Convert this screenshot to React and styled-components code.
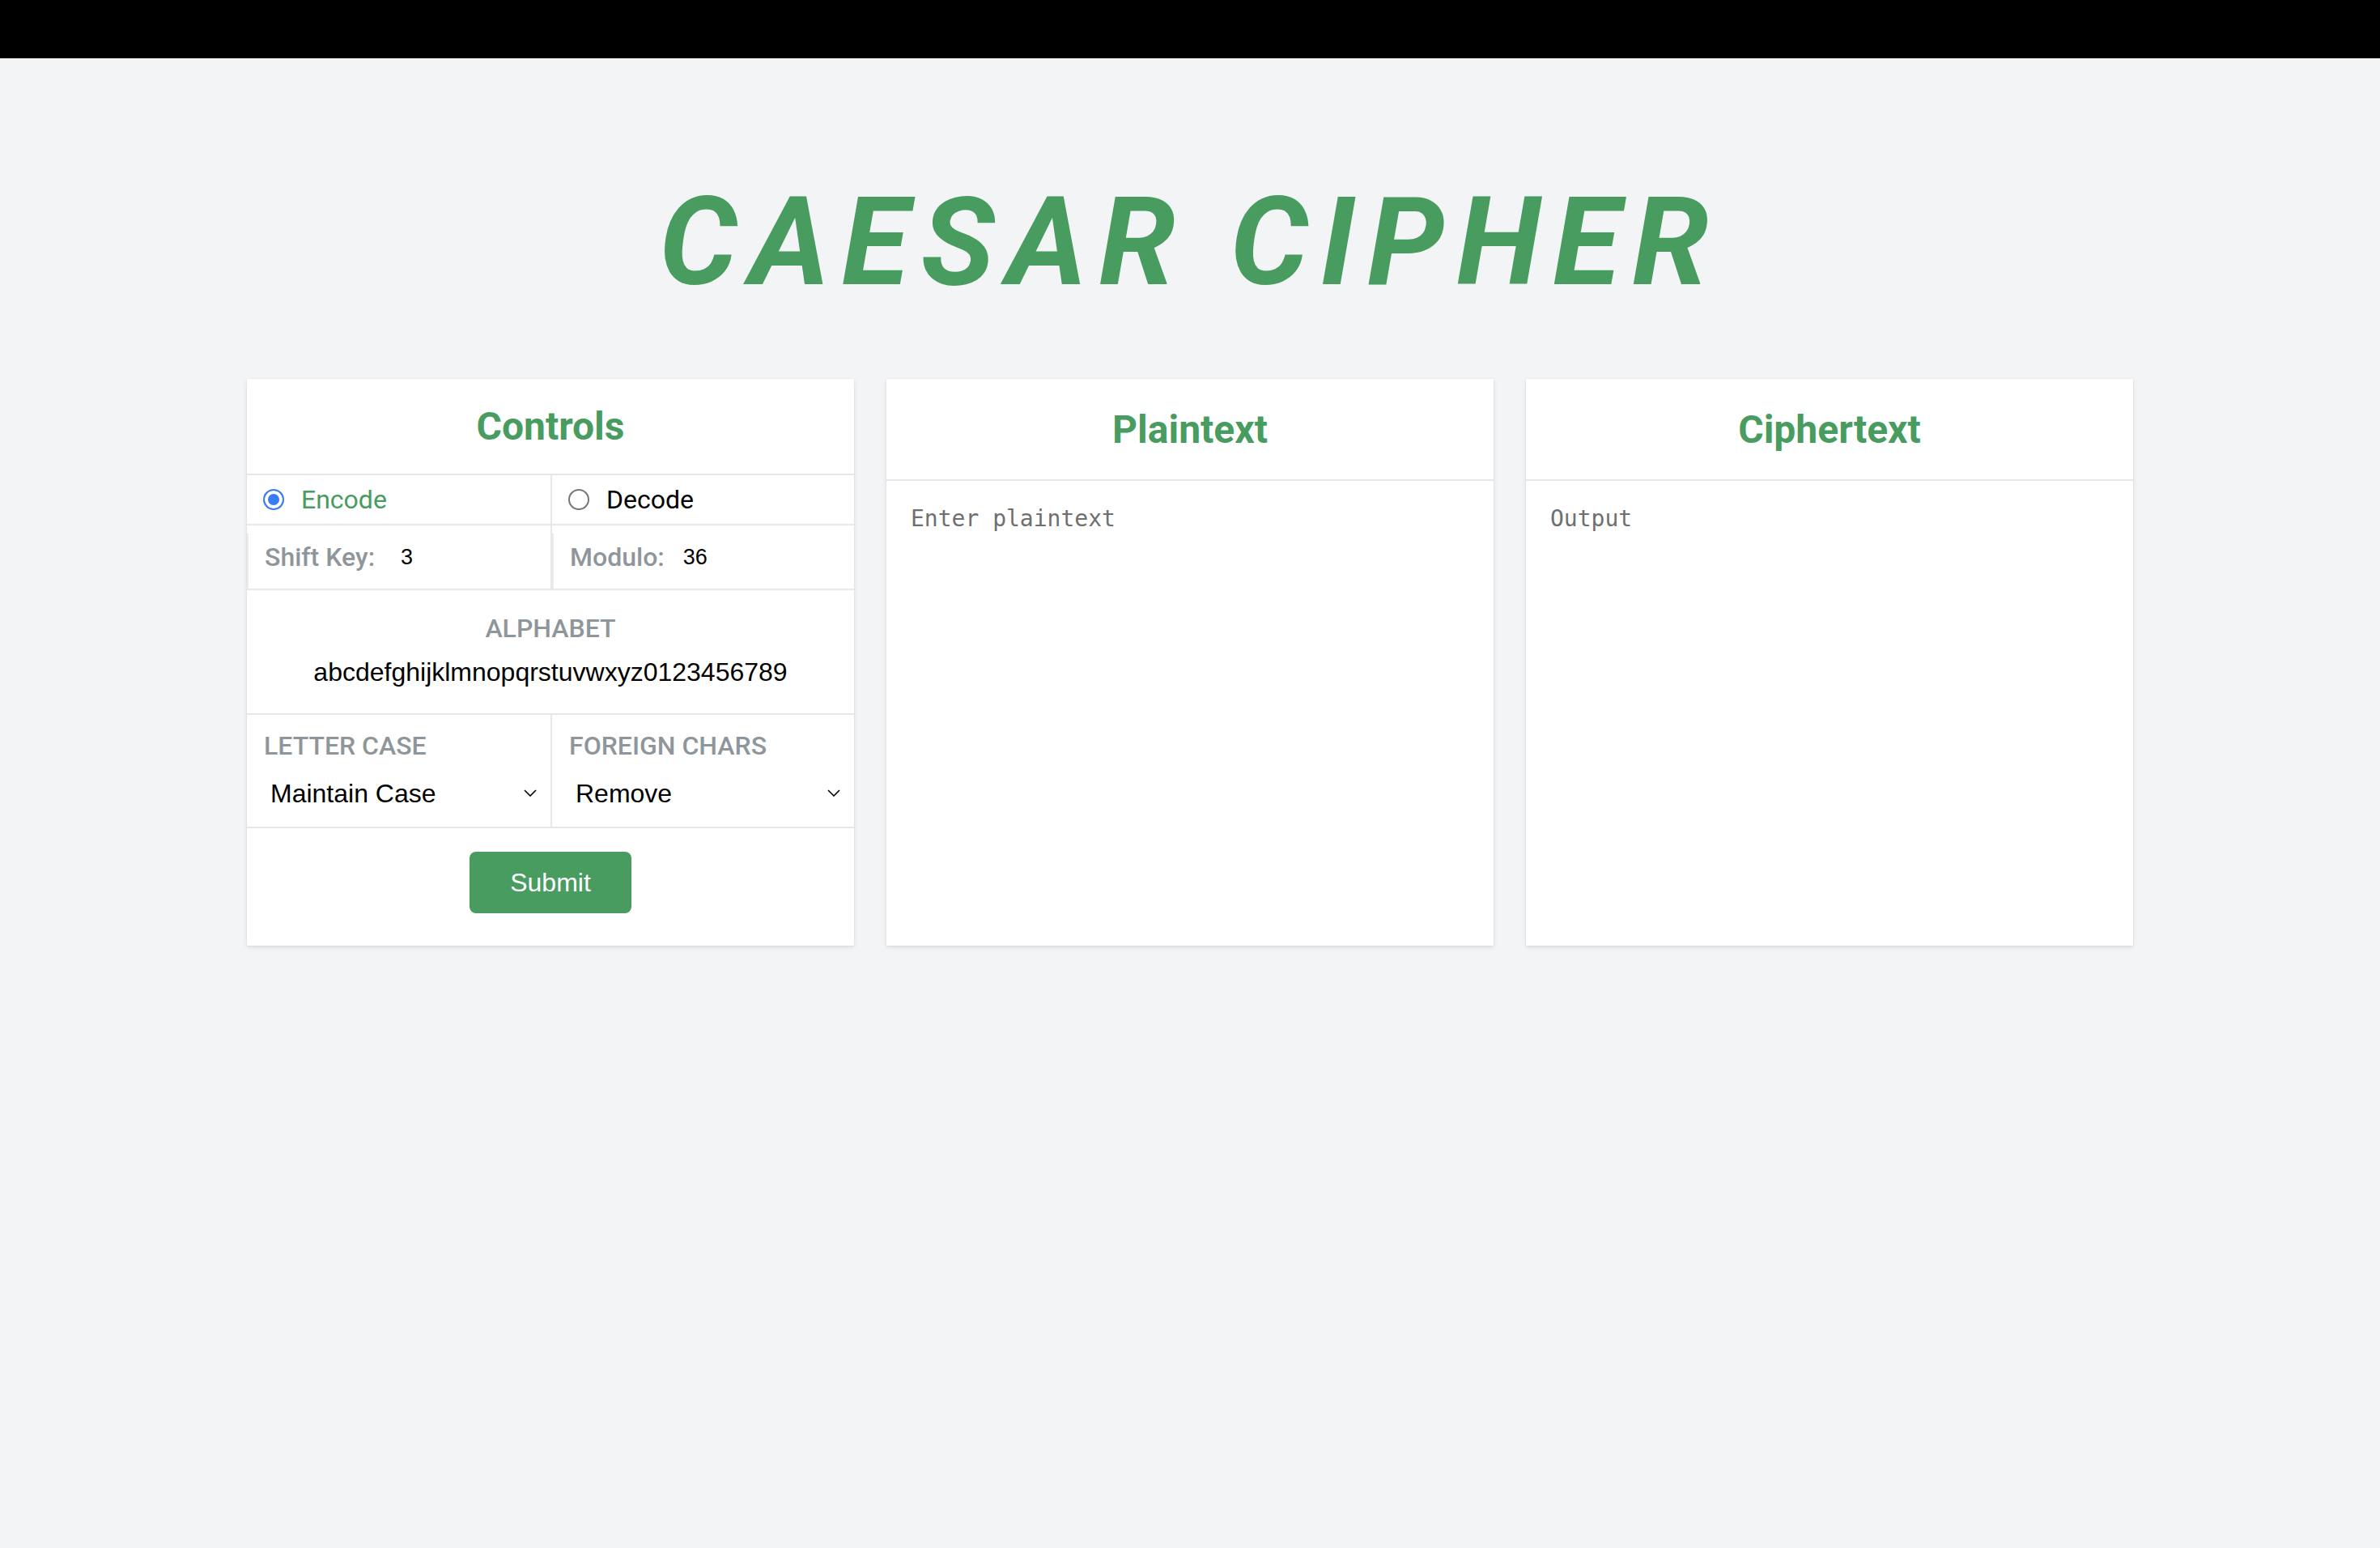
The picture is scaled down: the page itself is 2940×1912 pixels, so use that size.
import { useState } from "react";
import styled, { createGlobalStyle } from "styled-components";

const green = "#489c60";
const line = "#e5e7eb";
const muted = "#8f969b";

const GlobalStyle = createGlobalStyle`
  body {
    margin: 0;
    background: #f3f4f6;
    font-family: Roboto, "Liberation Sans", sans-serif;
  }
  * { box-sizing: border-box; }
`;

const TopBar = styled.div`
  height: 72px;
  background: #000;
`;

const Main = styled.main`
  display: flex;
  flex-direction: column;
  align-items: center;
  padding-bottom: 80px;
`;

const Title = styled.h1`
  margin: 151px 0 0;
  font-family: Roboto, sans-serif;
  font-size: 152px;
  line-height: 1;
  font-weight: 700;
  font-style: italic;
  letter-spacing: 15px;
  color: ${green};
`;

const Columns = styled.div`
  margin-top: 93px;
  display: grid;
  grid-template-columns: repeat(3, 750px);
  gap: 40px;
  align-items: stretch;
`;

const Card = styled.section`
  background: #fff;
  display: flex;
  flex-direction: column;
  box-shadow: 0 2px 5px rgba(0, 0, 0, 0.1), 0 0 1px rgba(0, 0, 0, 0.12);
`;

const CardHeader = styled.header`
  height: ${(p) => p.$h}px;
  flex-shrink: 0;
  border-bottom: 2px solid ${line};
  display: flex;
  align-items: center;
  justify-content: center;
  font-family: Roboto, sans-serif;
  font-size: 48px;
  font-weight: 700;
  color: ${green};
`;

const Row = styled.div`
  height: ${(p) => p.$h}px;
  display: grid;
  grid-template-columns: 1fr 1fr;
  border-bottom: 2px solid ${line};
`;

const RadioCell = styled.label`
  display: flex;
  align-items: center;
  gap: 21px;
  padding-left: 20px;
  font-family: Roboto, sans-serif;
  font-size: 32px;
  color: ${(p) => (p.$active ? green : "#000")};
  cursor: pointer;
  & + & {
    border-left: 2px solid ${line};
  }
`;

const Radio = styled.input`
  appearance: none;
  margin: 0;
  width: 26px;
  height: 26px;
  border-radius: 50%;
  border: 2px solid #767676;
  background: #fff;
  &:checked {
    border-color: #3b7bf6;
    background: #3b7bf6;
    box-shadow: inset 0 0 0 4px #fff;
  }
`;

const KeyCell = styled.label`
  position: relative;
  display: flex;
  align-items: center;
  padding-left: 22px;
  &::before {
    content: "";
    position: absolute;
    left: 0;
    top: 10px;
    bottom: 0;
    width: 2px;
    background: #eaebed;
  }
  & + & {
    border-left: 2px solid ${line};
  }
`;

const FieldLabel = styled.span`
  font-family: Roboto, sans-serif;
  font-size: 32px;
  line-height: 1.2;
  font-weight: 500;
  color: ${muted};
  text-transform: ${(p) => (p.$upper ? "uppercase" : "none")};
`;

const NumberInput = styled.input`
  margin-left: ${(p) => p.$gap}px;
  width: 120px;
  border: none;
  outline: none;
  padding: 0 2px;
  font-family: "Liberation Sans", Arial, sans-serif;
  font-size: 27px;
  color: #000;
  background: transparent;
`;

const AlphabetBlock = styled.div`
  height: 154px;
  border-bottom: 2px solid ${line};
  display: flex;
  flex-direction: column;
  align-items: center;
  padding-top: 28px;
  gap: 17px;
`;

const AlphabetInput = styled.input`
  width: 100%;
  border: none;
  outline: none;
  padding: 0;
  text-align: center;
  font-family: "Liberation Sans", Arial, sans-serif;
  font-size: 32px;
  color: #000;
  background: transparent;
`;

const SelectCell = styled.div`
  display: flex;
  flex-direction: column;
  gap: 21px;
  padding: 19px 17px 0 21px;
  & + & {
    border-left: 2px solid ${line};
  }
`;

const SelectWrap = styled.div`
  display: grid;
  align-items: center;
  & > * {
    grid-area: 1 / 1;
  }
  svg {
    justify-self: end;
    pointer-events: none;
  }
`;

const Select = styled.select`
  appearance: none;
  border: none;
  outline: none;
  background: transparent;
  padding: 0 30px 0 8px;
  height: 37px;
  font-family: "Liberation Sans", Arial, sans-serif;
  font-size: 32px;
  color: #000;
`;

const SubmitArea = styled.div`
  height: 145px;
  display: flex;
  justify-content: center;
  padding-top: 29px;
`;

const SubmitButton = styled.button`
  width: 200px;
  height: 76px;
  border: none;
  border-radius: 8px;
  background: ${green};
  color: #fff;
  font-family: "Liberation Sans", Arial, sans-serif;
  font-size: 32px;
  cursor: pointer;
`;

const TextArea = styled.textarea`
  flex: 1;
  border: none;
  outline: none;
  resize: none;
  padding: 30px;
  font-family: "DejaVu Sans Mono", monospace;
  font-size: 28px;
  line-height: 1.2;
  color: #222;
  background: transparent;
  &::placeholder {
    color: #6f6f6f;
  }
`;

const Chevron = () => (
  <svg width="16" height="9" viewBox="0 0 16 9" fill="none">
    <path d="M1 1l7 7 7-7" stroke="#000" strokeWidth="1.6" />
  </svg>
);

const App = () => {
  const [mode, setMode] = useState("encode");
  const [shift, setShift] = useState("3");
  const [modulo, setModulo] = useState("36");
  const [alphabet, setAlphabet] = useState("abcdefghijklmnopqrstuvwxyz0123456789");
  const [plain, setPlain] = useState("");

  return (
    <>
      <GlobalStyle />
      <TopBar />
      <Main>
        <Title>CAESAR CIPHER</Title>
        <Columns>
          <Card>
            <CardHeader $h={119}>Controls</CardHeader>
            <Row $h={62}>
              <RadioCell $active={mode === "encode"}>
                <Radio
                  type="radio"
                  name="mode"
                  checked={mode === "encode"}
                  onChange={() => setMode("encode")}
                />
                Encode
              </RadioCell>
              <RadioCell $active={mode === "decode"}>
                <Radio
                  type="radio"
                  name="mode"
                  checked={mode === "decode"}
                  onChange={() => setMode("decode")}
                />
                Decode
              </RadioCell>
            </Row>
            <Row $h={80}>
              <KeyCell>
                <FieldLabel>Shift Key:</FieldLabel>
                <NumberInput $gap={30} value={shift} onChange={(e) => setShift(e.target.value)} />
              </KeyCell>
              <KeyCell>
                <FieldLabel>Modulo:</FieldLabel>
                <NumberInput $gap={21} value={modulo} onChange={(e) => setModulo(e.target.value)} />
              </KeyCell>
            </Row>
            <AlphabetBlock>
              <FieldLabel $upper>Alphabet</FieldLabel>
              <AlphabetInput value={alphabet} onChange={(e) => setAlphabet(e.target.value)} />
            </AlphabetBlock>
            <Row $h={140}>
              <SelectCell>
                <FieldLabel $upper>Letter Case</FieldLabel>
                <SelectWrap>
                  <Select defaultValue="maintain">
                    <option value="maintain">Maintain Case</option>
                    <option value="upper">Uppercase</option>
                    <option value="lower">Lowercase</option>
                  </Select>
                  <Chevron />
                </SelectWrap>
              </SelectCell>
              <SelectCell>
                <FieldLabel $upper>Foreign Chars</FieldLabel>
                <SelectWrap>
                  <Select defaultValue="remove">
                    <option value="remove">Remove</option>
                    <option value="keep">Keep</option>
                  </Select>
                  <Chevron />
                </SelectWrap>
              </SelectCell>
            </Row>
            <SubmitArea>
              <SubmitButton>Submit</SubmitButton>
            </SubmitArea>
          </Card>

          <Card>
            <CardHeader $h={126}>Plaintext</CardHeader>
            <TextArea
              placeholder="Enter plaintext"
              value={plain}
              onChange={(e) => setPlain(e.target.value)}
            />
          </Card>

          <Card>
            <CardHeader $h={126}>Ciphertext</CardHeader>
            <TextArea placeholder="Output" readOnly />
          </Card>
        </Columns>
      </Main>
    </>
  );
};

export default App;
